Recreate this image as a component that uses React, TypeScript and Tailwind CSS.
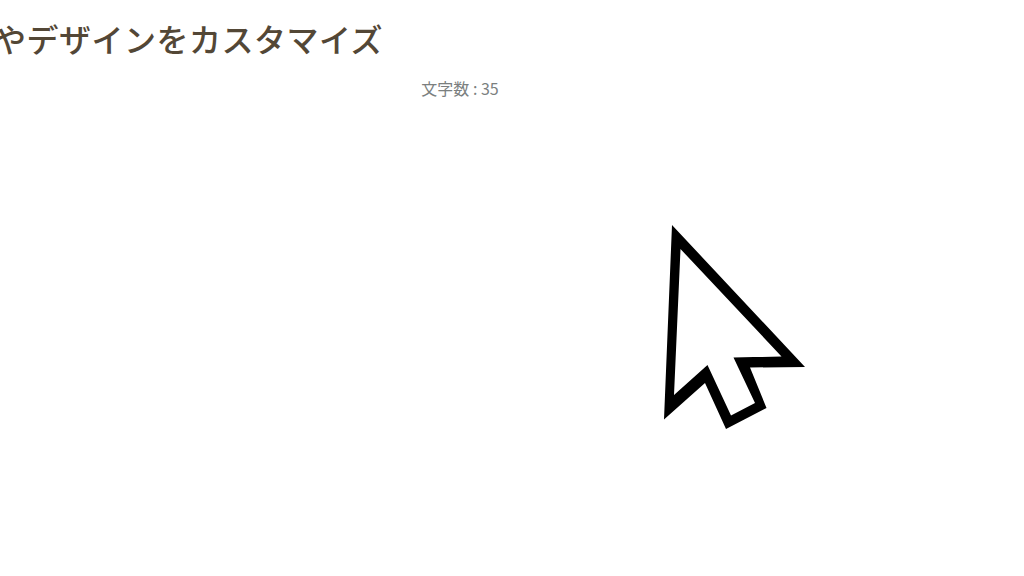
const JP = 'font-["Noto_Sans_CJK_JP","Noto_Sans",sans-serif]';

function Cursor() {
  return (
    <svg className="absolute left-[650px] top-[215px]" width="170" height="225" viewBox="650 215 170 225">
      <path
        fill="#000"
        fillRule="evenodd"
        d="M672 225 L805 367 L750 367.5 L766.5 408 L726 429 L705 383 L664 419.5 Z M680.5 249 L674 395 L707.5 365 L731 415.5 L755 403 L733.5 357.5 L781.5 356.5 Z"
      />
    </svg>
  );
}

export default function App() {
  return (
    <div className={`relative w-[1024px] h-[576px] overflow-hidden bg-white ${JP}`}>
      <div className="flex flex-col">
        <h1 className="ml-[-6px] mt-[15px] h-[46px] whitespace-nowrap text-[32px] leading-[46px] tracking-[0.5px] font-medium text-[#534736]">
          やデザインをカスタマイズ
        </h1>
        <p className="mt-[16px] w-[920px] text-center text-[16px] leading-[22px] text-[#7b7f7f]">文字数 : 35</p>
      </div>
      <Cursor />
    </div>
  );
}
